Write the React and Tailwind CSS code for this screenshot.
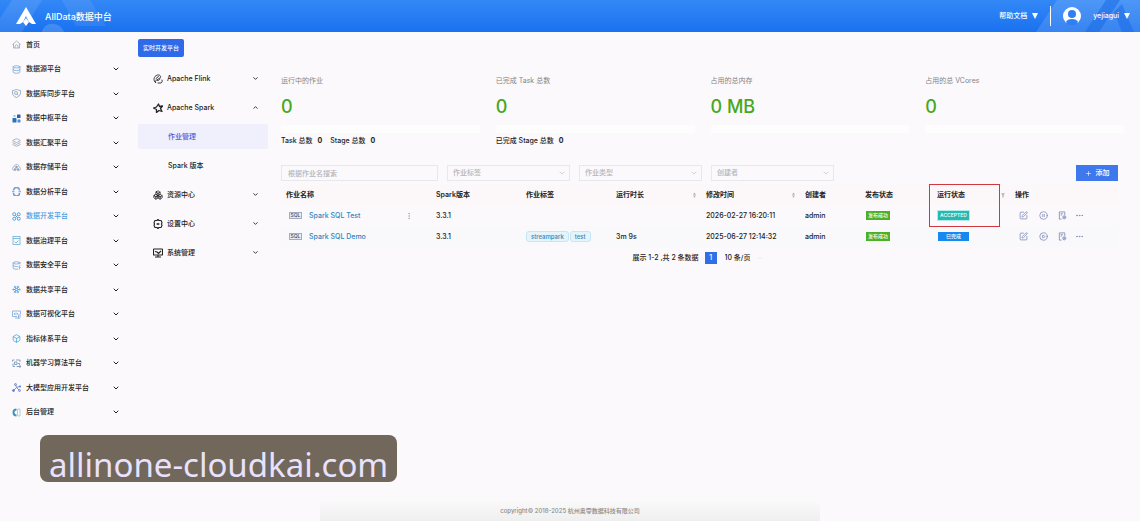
import { useState } from "react";
import {
  Database,
  Layers,
  DatabaseZap,
  Snowflake,
  Box,
  ChevronDown,
  ChevronUp,
  Plus,
  SquarePen,
  CirclePause,
  CirclePlay,
  Boxes,
  Ellipsis,
  EllipsisVertical,
} from "lucide-react";

function HomeIcon({ className }) {
  return (
    <svg viewBox="0 0 18 18" className={className} fill="none" stroke="currentColor" strokeWidth="1.5">
      <path d="M1 9l8-7 8 7M3 8v8h12V8" />
      <path d="M6 16v-4c0-3 6-3 6 0v4" />
    </svg>
  );
}

function SyncIcon({ className }) {
  return (
    <svg viewBox="0 0 18 18" className={className} fill="none" stroke="currentColor" strokeWidth="1.5">
      <path d="M9 17C4 15 1 12 1 8V3c5 0 5-2 8-2s3 2 8 2v5c0 4-3 7-8 9z" />
      <circle cx="8" cy="8" r="3" />
      <path d="M10 10l3 3" />
    </svg>
  );
}

// Four small tiles, two of them filled
function HubIcon({ className }) {
  return (
    <svg viewBox="0 0 18 18" className={className}>
      <rect x="1" y="8" width="8" height="9" rx="1" fill="#2f6fb5" />
      <rect x="11" y="11" width="6" height="6" rx="1" fill="#4d8fd0" />
      <rect x="10" y="1" width="7" height="7" rx="1" fill="#2563a8" />
      <rect x="3" y="2" width="4" height="4" rx="1" fill="#9cc4ea" />
    </svg>
  );
}

function StorageIcon({ className }) {
  return (
    <svg viewBox="0 0 18 18" className={className} fill="none" stroke="currentColor" strokeWidth="1.4">
      <path d="M4 15C0 14 0 8 4 8c0-7 10-7 10 0 4 0 4 6 0 7" />
      <circle cx="9" cy="8" r="2" fill="currentColor" />
      <circle cx="6" cy="13" r="2" fill="currentColor" />
      <circle cx="12" cy="13" r="2" fill="currentColor" />
    </svg>
  );
}

function AnalysisIcon({ className }) {
  return (
    <svg viewBox="0 0 18 18" className={className} fill="none" stroke="currentColor">
      <path d="M3 7a6 6 0 0 1 12 0M3 12a6 6 0 0 0 12 0" strokeWidth="3" />
      <path d="M0 9.500h5M13 9.500h5" strokeWidth="2" />
    </svg>
  );
}

function DevIcon({ className }) {
  return (
    <svg viewBox="0 0 18 18" className={className} fill="none" stroke="currentColor" strokeWidth="1.8">
      <circle cx="4.5" cy="4.5" r="3" />
      <circle cx="13.5" cy="4.5" r="3" />
      <circle cx="4.5" cy="13.5" r="3" />
      <circle cx="13.5" cy="13.5" r="3" />
      <path d="M6.5 6.5l5 5M11.5 6.5l-5 5" />
    </svg>
  );
}

function GovernIcon({ className }) {
  return (
    <svg viewBox="0 0 18 18" className={className} fill="none" stroke="currentColor" strokeWidth="1.6">
      <rect x="2" y="1" width="14" height="16" />
      <path d="M2 5h14M5 11l3 3 5-5" />
    </svg>
  );
}

function VisualIcon({ className }) {
  return (
    <svg viewBox="0 0 18 18" className={className} fill="none" stroke="currentColor" strokeWidth="1.6">
      <path d="M10 13H1V2h16v6" />
      <path d="M5 6v4M8 5v5M11 6v3M6 16h4M13 9v8M10 16h6M16 8v7" />
    </svg>
  );
}

function LearnIcon({ className }) {
  return (
    <svg viewBox="0 0 18 18" className={className} fill="none" stroke="currentColor" strokeWidth="1.6">
      <path d="M1 5V2h4M8 2h8v4M2 9v6h4M9 15h6" />
      <path d="M5 6h5v5H5zM12 9h3v3" />
      <circle cx="16" cy="15" r="1.500" fill="currentColor" />
    </svg>
  );
}

function ModelIcon({ className }) {
  return (
    <svg viewBox="0 0 18 18" className={className} fill="none" stroke="currentColor" strokeWidth="1.6">
      <path d="M7 3l2 6-6 6M9 9l6-2M9 9l6 6" />
      <circle cx="7" cy="3" r="2" />
      <circle cx="3" cy="15" r="2" fill="currentColor" />
      <circle cx="16" cy="7" r="1.500" fill="currentColor" />
      <circle cx="15" cy="15" r="2" />
    </svg>
  );
}

function AdminIcon({ className }) {
  return (
    <svg viewBox="0 0 18 18" className={className} fill="none" stroke="currentColor">
      <path d="M9 3a6 6 0 0 0 0 12" strokeWidth="4" />
      <path d="M11 2v14M12 2h4v14h-4" strokeWidth="1.400" opacity=".6" />
    </svg>
  );
}

function FlinkIcon({ className }) {
  return (
    <svg viewBox="0 0 20 20" className={className} fill="none" stroke="currentColor" strokeWidth="1.8" strokeLinecap="round">
      <path d="M5 17C0 14 1 4 9 2c5-1 8 3 5 6-2 2-5 2-7 4-2 1-3 3-2 5z" />
      <path d="M6 9l5-4M9 13c2 0 4-1 5-3M10 18h6c2-1 3-3 2-6" />
    </svg>
  );
}

function SparkIcon({ className }) {
  return (
    <svg viewBox="0 0 20 20" className={className} fill="none" stroke="currentColor" strokeWidth="2.6" strokeLinejoin="round">
      <path d="M11 2l2 5 6-1-4 5 3 6-6-2-5 4 0-6-6-3 6-2z" />
    </svg>
  );
}

function GearIcon({ className }) {
  return (
    <svg viewBox="0 0 20 20" className={className} fill="none" stroke="currentColor" strokeWidth="2.2" strokeLinejoin="round">
      <path d="M10 1l2 2 4 0 2 4-1 3 1 3-2 4h-4l-2 2-2-2H4l-2-4 1-3-1-3 2-4 4 0z" />
      <path d="M7 10h6M10 8v4" />
    </svg>
  );
}

function SystemIcon({ className }) {
  return (
    <svg viewBox="0 0 20 20" className={className} fill="none" stroke="currentColor" strokeWidth="2.2">
      <rect x="1" y="2" width="18" height="12" rx="1" />
      <path d="M4 7l4 1 3 3 5-5M10 14v4M4 18h12" />
    </svg>
  );
}

// Document with a small clock in the corner
function LogIcon({ className }) {
  return (
    <svg viewBox="0 0 20 20" className={className} fill="none" stroke="currentColor" strokeWidth="1.8">
      <path d="M8 18H3V2h12v7" />
      <path d="M6 6h5M6 9h3" />
      <circle cx="14" cy="14" r="3.5" />
      <path d="M14 12v4M12 14h4" />
    </svg>
  );
}

function Caret() {
  return (
    <svg viewBox="0 0 6 6" className="size-[6px]" fill="currentColor">
      <path d="M0 0h6L3 6z" />
    </svg>
  );
}

const platforms = [
  { name: "首页", icon: HomeIcon, color: "text-slate-400", leaf: true },
  { name: "数据源平台", icon: Database, color: "text-[#6da4dc]" },
  { name: "数据库同步平台", icon: SyncIcon, color: "text-[#7f9cb5]" },
  { name: "数据中枢平台", icon: HubIcon, color: "text-[#2f6fb5]" },
  { name: "数据汇聚平台", icon: Layers, color: "text-slate-400" },
  { name: "数据存储平台", icon: StorageIcon, color: "text-slate-400" },
  { name: "数据分析平台", icon: AnalysisIcon, color: "text-[#6b9fd6]" },
  { name: "数据开发平台", icon: DevIcon, color: "text-[#4a9bdc]", active: true },
  { name: "数据治理平台", icon: GovernIcon, color: "text-[#6aaed6]" },
  { name: "数据安全平台", icon: DatabaseZap, color: "text-[#6d9fdc]" },
  { name: "数据共享平台", icon: Snowflake, color: "text-[#4a9bdc]" },
  { name: "数据可视化平台", icon: VisualIcon, color: "text-[#7fa8d8]" },
  { name: "指标体系平台", icon: Box, color: "text-[#3fa4d8]" },
  { name: "机器学习算法平台", icon: LearnIcon, color: "text-[#6f8fb5]" },
  { name: "大模型应用开发平台", icon: ModelIcon, color: "text-[#5f7fc8]" },
  { name: "后台管理", icon: AdminIcon, color: "text-[#3f94b8]" },
];

const stats = [
  { label: "运行中的作业", value: "0", extra: [["Task 总数", 0], ["Stage 总数", 0]] },
  { label: "已完成 Task 总数", value: "0", extra: [["已完成 Stage 总数", 0]] },
  { label: "占用的总内存", value: "0 MB", extra: [] },
  { label: "占用的总 VCores", value: "0", extra: [] },
];

const jobs = [
  {
    name: "Spark SQL Test",
    version: "3.3.1",
    tags: [],
    duration: "",
    modified: "2026-02-27 16:20:11",
    owner: "admin",
    state: "ACCEPTED",
    running: true,
  },
  {
    name: "Spark SQL Demo",
    version: "3.3.1",
    tags: ["streampark", "test"],
    duration: "3m 9s",
    modified: "2025-06-27 12:14:32",
    owner: "admin",
    state: "已完成",
    running: false,
  },
];

function Header() {
  return (
    <header className="relative flex h-8 items-center justify-between bg-linear-to-b from-[#3388f6] to-[#1a71f0] pl-4 pr-[10px] text-white">
      <svg className="absolute left-0 top-0 h-8 w-32" viewBox="0 0 128 32" fill="#ffffff">
        <path d="M0 32V18L12 0h30L22 32z" opacity=".1" />
        <path d="M62 0h28l16 26H76z" opacity=".08" />
        <path d="M42 32c2-11 18-11 22 0z" opacity=".16" />
      </svg>
      <svg className="absolute right-0 top-0 h-8 w-28" viewBox="0 0 112 32">
        <path d="M8 32L29 0h83v32z" fill="#ffffff" opacity=".13" />
        <path d="M57 32L78 0h14L71 32zM86 12l8-8 12 28H94z" fill="#1a6be6" opacity=".55" />
      </svg>

      <div className="relative flex items-center gap-[9px]">
        <svg viewBox="0 0 20 19" className="h-[19px] w-5" fill="currentColor">
          <path d="M10 0l10 17h-4l-3-2-3-6-3 6-3 2H0z" />
          <path d="M10 11l3 4-3 4-3-4z" />
        </svg>
        <h1 className="pt-[2px] text-[9px] font-medium leading-3">AllData数据中台</h1>
      </div>

      <div className="relative flex items-center">
        <button className="flex items-center gap-[5px]">
          帮助文档 <Caret />
        </button>
        <span className="ml-3 h-5 w-px bg-white"></span>
        <svg viewBox="0 0 18 18" className="ml-3 size-[18px]">
          <circle cx="9" cy="9" r="9" fill="#fff" />
          <circle cx="9" cy="7" r="4" fill="#2f7ff0" />
          <path d="M3 15c1-4 11-4 12 0l-2 3H5z" fill="#2f7ff0" />
        </svg>
        <button className="ml-3 flex items-center gap-[5px]">
          yejiagui <Caret />
        </button>
      </div>
    </header>
  );
}

function Sidebar() {
  return (
    <nav className="w-32 shrink-0 pl-3 pr-2">
      <ul>
        {platforms.map(({ name, icon: Icon, color, leaf, active }) => (
          <li key={name} className="odd:h-[25px] even:h-6">
            <button className="flex h-full w-full items-center">
              <Icon className={`size-[9px] shrink-0 ${color}`} />
              <span className={`ml-[5px] flex-1 text-left ${active ? "text-[#4a9bdc]" : ""}`}>{name}</span>
              {!leaf && <ChevronDown className="size-2" strokeWidth={3} />}
            </button>
          </li>
        ))}
      </ul>
    </nav>
  );
}

function MenuGroup({ icon: Icon, name, open, onClick }) {
  const Chevron = open ? ChevronUp : ChevronDown;
  return (
    <button onClick={onClick} className="flex h-[29px] w-full items-center pl-[15px] pr-[9px]">
      <Icon className="size-[10px] shrink-0" />
      <span className="ml-1 flex-1 text-left">{name}</span>
      <Chevron className="size-[7px]" strokeWidth={3} />
    </button>
  );
}

function SubMenu() {
  const [sparkOpen, setSparkOpen] = useState(true);

  return (
    <nav className="ml-[10px] w-[130px] shrink-0 pt-[7px]">
      <button className="mb-[7px] block h-[18px] rounded-[2px] bg-[#2f6be8] px-[5px] text-[6px] text-white">
        实时开发平台
      </button>
      <MenuGroup icon={FlinkIcon} name="Apache Flink" />
      <MenuGroup icon={SparkIcon} name="Apache Spark" open={sparkOpen} onClick={() => setSparkOpen(!sparkOpen)} />
      {sparkOpen && (
        <>
          <div className="flex h-[29px] items-center">
            <a href="#jobs" className="flex h-[25px] w-full items-center rounded-[2px] bg-[#eff0fb] pl-[30px] text-[#5a55dc]">
              作业管理
            </a>
          </div>
          <a href="#versions" className="flex h-[29px] items-center pl-[30px]">
            Spark 版本
          </a>
        </>
      )}
      <MenuGroup icon={Boxes} name="资源中心" />
      <MenuGroup icon={GearIcon} name="设置中心" />
      <MenuGroup icon={SystemIcon} name="系统管理" />
    </nav>
  );
}

function Stats() {
  return (
    <section className="grid grid-cols-4">
      {stats.map((stat) => (
        <div key={stat.label}>
          <p className="font-normal leading-2 text-[#858585]">{stat.label}</p>
          <p className="mt-[10px] text-[18px] leading-6 text-[#46a81d]">{stat.value}</p>
          <div className="mr-4 mt-[6px] h-2 bg-[#fdfdfe]"></div>
          <div className="mt-1 flex h-2 items-center gap-2 leading-2">
            {stat.extra.map(([label, value]) => (
              <span key={label} className="flex gap-[5px]">
                {label} <b>{value}</b>
              </span>
            ))}
          </div>
        </div>
      ))}
    </section>
  );
}

function FilterSelect({ label }) {
  return (
    <div className="relative w-[123px]">
      <select
        aria-label={label}
        className="block h-4 w-full appearance-none border border-[#e8e8ea] pl-[5px] text-[7px] text-[#b5b5b9]"
      >
        <option>{label}</option>
      </select>
      <ChevronDown className="pointer-events-none absolute right-1 top-1 size-2 text-[#b9b9bd]" />
    </div>
  );
}

function Sorter() {
  return (
    <svg viewBox="0 0 4 7" className="h-[6px] w-[3px]" fill="#b0b0b0">
      <path d="M2 0l2 3H0zM2 7L0 4h4z" />
    </svg>
  );
}

function JobTable() {
  return (
    <table className="mt-1 w-full table-fixed text-left">
      <colgroup>
        <col className="w-[150px]" />
        <col className="w-[90px]" />
        <col className="w-[90px]" />
        <col className="w-[90px]" />
        <col className="w-[99px]" />
        <col className="w-[60px]" />
        <col className="w-[72px]" />
        <col className="w-[78px]" />
        <col />
      </colgroup>
      <thead>
        <tr className="h-5 bg-[#fcf8f9] [&>th]:px-[5px] [&>th]:py-0 [&>th]:font-semibold">
          <th>作业名称</th>
          <th>Spark版本</th>
          <th>作业标签</th>
          <th>
            <span className="flex items-center justify-between">
              运行时长 <Sorter />
            </span>
          </th>
          <th>
            <span className="flex items-center justify-between">
              修改时间 <Sorter />
            </span>
          </th>
          <th>创建者</th>
          <th>发布状态</th>
          <th className="relative">
            <span className="flex items-center justify-between">
              运行状态
              <svg viewBox="0 0 6 7" className="h-[5px] w-1" fill="#b5b5b5">
                <path d="M0 0h6L4 3v4L2 6V3z" />
              </svg>
            </span>
            {/* Highlight round the running state column */}
            <span className="pointer-events-none absolute -left-[3px] -top-px h-[43px] w-[71px] border border-[#d2373f]"></span>
          </th>
          <th>操作</th>
        </tr>
      </thead>
      <tbody>
        {jobs.map((job) => (
          <tr key={job.name} className="h-[21px] even:bg-[#f9f8fb] [&>td]:px-[5px] [&>td]:py-0">
            <td>
              <span className="flex items-center">
                <span className="ml-[3px] w-[13px] border border-[#a3abc0] bg-[#e9ebf3] text-center text-[5px] leading-[5px] text-[#3d4968]">
                  SQL
                </span>
                <a href="#job" className="ml-[7px] flex-1 text-[#2f86c0]">
                  {job.name}
                </a>
                {job.running && <EllipsisVertical className="mr-[13px] size-2 text-slate-400" />}
              </span>
            </td>
            <td>{job.version}</td>
            <td className="whitespace-nowrap">
              <span className="flex gap-px">
                {job.tags.map((tag) => (
                  <span
                    key={tag}
                    className="rounded-[3px] border border-[#c5e6f7] bg-[#e4f4fd] px-1 text-[6px] leading-[9px] text-[#3b82ae]"
                  >
                    {tag}
                  </span>
                ))}
              </span>
            </td>
            <td>{job.duration}</td>
            <td>{job.modified}</td>
            <td>{job.owner}</td>
            <td>
              <span className="ml-px block w-6 bg-[#4cb028] text-center text-[5px] leading-[9px] text-white">发布成功</span>
            </td>
            <td>
              <span
                className={`ml-px block w-[31px] text-center text-[5px] leading-[9px] text-white ${
                  job.running ? "bg-[#25b9b4] ring-1 ring-[#b5ecea]" : "bg-[#1688ee]"
                }`}
              >
                {job.state}
              </span>
            </td>
            <td>
              <span className="ml-1 flex items-center gap-[11px] text-[#7b86b8]">
                <button aria-label="编辑">
                  <SquarePen className="size-[9px]" />
                </button>
                <button aria-label={job.running ? "停止" : "启动"}>
                  {job.running ? <CirclePause className="size-[9px]" /> : <CirclePlay className="size-[9px]" />}
                </button>
                <button aria-label="日志" className="-ml-px">
                  <LogIcon className="size-[9px]" />
                </button>
                <button aria-label="更多" className="-ml-[3px]">
                  <Ellipsis className="size-[9px]" />
                </button>
              </span>
            </td>
          </tr>
        ))}
      </tbody>
    </table>
  );
}

export default function App() {
  return (
    <div
      lang="zh-CN"
      className="relative flex min-h-screen flex-col bg-[#fbf9fb] font-['Inter','Noto_Sans_CJK_SC',sans-serif] text-[7px] font-medium leading-[10px] text-[#222]"
    >
      <Header />

      <div className="flex flex-1">
        <Sidebar />
        <SubMenu />

        <main className="ml-[13px] min-w-0 flex-1 pt-[45px]">
          <Stats />

          <div className="mr-[22px] mt-5">
            <div className="flex items-center gap-[9px]">
              <input
                aria-label="作业名称"
                placeholder="根据作业名搜索"
                className="h-4 w-[157px] border border-[#e8e8ea] px-[6px] text-[7px] placeholder:text-[#b5b5b9]"
              />
              <FilterSelect label="作业标签" />
              <FilterSelect label="作业类型" />
              <FilterSelect label="创建者" />
              <button className="ml-auto flex h-4 w-[42px] items-center justify-center gap-1 bg-[#3f77ec] text-white">
                <Plus className="size-[7px]" /> 添加
              </button>
            </div>

            <JobTable />

            <div className="mt-[5px] flex h-3 items-center justify-center">
              <span>展示 1-2 ,共 2 条数据</span>
              <button className="ml-[6px] size-3 bg-[#2f6fe8] text-white">1</button>
              <div className="relative ml-[6px]">
                <select aria-label="每页条数" className="block h-3 w-11 appearance-none pl-[2px] text-[7px]">
                  <option>10 条/页</option>
                </select>
                <ChevronDown className="pointer-events-none absolute right-1 top-[3px] size-[6px] text-[#d5d5d8]" />
              </div>
            </div>
          </div>
        </main>
      </div>

      <footer className="flex h-[21px] justify-center">
        <p className="flex w-[500px] items-center justify-center rounded-t-lg bg-linear-to-b from-[#fbfafb] to-[#eeefee] text-[6px] text-[#8a8a8a]">
          copyright© 2018-2025 杭州奥零数据科技有限公司
        </p>
      </footer>

      <div className="absolute bottom-[39px] left-10 flex h-[47px] items-center rounded-lg bg-[#71675b] px-[9px] pt-3 font-['Noto_Sans',sans-serif] text-[33px] font-normal leading-[34px] text-[#e9e2ff]">
        allinone-cloudkai.com
      </div>
    </div>
  );
}
